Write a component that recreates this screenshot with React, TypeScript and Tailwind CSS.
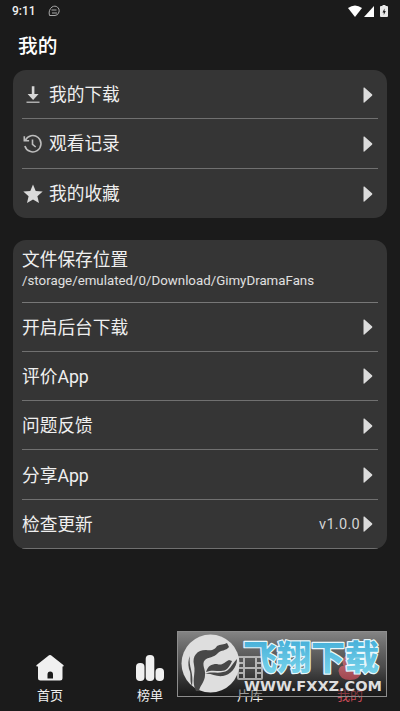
import type { ReactNode } from 'react';

const DownloadIcon = () => (
  <svg viewBox="0 0 20 20" className="size-5" fill="#d6d6d6">
    <path d="M8.800 1.300h2.600v7.700h4.200L10.100 15 4.600 9H8.800z" />
    <path d="M3.500 16.500h13v1.500h-13z" opacity=".75" />
  </svg>
);

const HistoryIcon = () => (
  <svg viewBox="0 0 20 20" className="size-5" fill="none" stroke="#bdbdbd" strokeWidth="1.600">
    <path d="M2.300 6.300A8.200 8.200 0 1 1 1.900 12" />
    <path d="M1.300 2.200v4.600h4.800" />
    <path d="M9.500 5.500v4.800l3.200 2.700" />
  </svg>
);

const StarIcon = () => (
  <svg viewBox="0 0 20 20" className="size-5" fill="#dadada">
    <path d="M10 .6l2.700 6.400 7 .6-5.300 4.600 1.600 6.900L10 15.400 4 19.100l1.600-6.900L.3 7.600l7-.6z" />
  </svg>
);

const Arrow = () => (
  <svg viewBox="0 0 10 16" className="h-4 w-2.5 shrink-0" fill="#dcdcdc">
    <path d="M.5 1Q.5 0 1.400.6L9 7.300q.8.700 0 1.400L1.400 15.400Q.5 16 .5 15z" />
  </svg>
);

const HomeIcon = () => (
  <svg viewBox="0 0 28 28" className="size-7" fill="#f0f0f0">
    <path
      fillRule="evenodd"
      d="M13 1.300q1-.7 2 0L27.300 11q1 1.200-.3 1.500H26.500V24q0 2.500-2.500 2.500H4.500Q2 26.500 2 24V12.500H1q-1.300-.3-.3-1.500zM11.500 24.500h5.500v-4q0-3-2.750-3t-2.750 3z"
    />
  </svg>
);

const RankIcon = () => (
  <svg viewBox="0 0 28 28" className="size-7" fill="#f0f0f0">
    <rect x="0" y="9" width="8.500" height="18" rx="4" />
    <rect x="9.700" y="1" width="8.600" height="26" rx="4" />
    <rect x="19.500" y="14" width="8.500" height="13" rx="4" />
  </svg>
);

const LibraryIcon = () => (
  <svg viewBox="0 0 28 28" className="size-7" fill="none" stroke="#f0f0f0" strokeWidth="2">
    <rect x="2" y="3" width="24" height="22" rx="1" />
    <path d="M8 3v22M20 3v22M2 9h6M2 14h6M2 19h6M20 9h6M20 14h6M20 19h6M8 14h12" />
  </svg>
);

const UserIcon = () => (
  <svg viewBox="0 0 28 28" className="size-7" fill="#e83f50">
    <circle cx="14" cy="8" r="7.500" />
    <path d="M2.500 17Q3 11 10 12h8q7-1 7.500 5-1 9-11.500 9T2.500 17z" />
  </svg>
);

interface RowProps {
  label: string;
  icon?: ReactNode;
  value?: string;
  last?: boolean;
}

function Row({ label, icon, value, last }: RowProps) {
  return (
    <div className={`flex h-[49.3px] items-center pt-px pr-[5px] ${last ? '' : 'border-b border-[#707070]'}`}>
      {icon && <span className="mr-[6px] ml-px">{icon}</span>}
      <span className="flex-1 pt-px">{label}</span>
      {value && <span className="mr-[3px] pt-px text-[14.5px] tracking-[0.3px] text-[#d4d4d4]">{value}</span>}
      <Arrow />
    </div>
  );
}

const tabs = [
  { label: '首页', icon: <HomeIcon /> },
  { label: '榜单', icon: <RankIcon /> },
  { label: '片库', icon: <LibraryIcon /> },
  { label: '我的', icon: <UserIcon />, active: true },
];

function Watermark() {
  return (
    <svg viewBox="0 0 210 66" className="absolute top-[631px] left-[177px] h-[66px] w-[210px]">
      <defs>
        <linearGradient id="plate" x1="0" y1="0" x2="0" y2="1">
          <stop offset="0" stopColor="#a8a8a8" stopOpacity=".75" />
          <stop offset=".55" stopColor="#7c7c7c" stopOpacity=".5" />
          <stop offset="1" stopColor="#141414" stopOpacity=".4" />
        </linearGradient>
        <linearGradient id="sky" x1="0" y1="0" x2="0" y2="1">
          <stop offset="0" stopColor="#39a6d4" />
          <stop offset="1" stopColor="#80d9ed" />
        </linearGradient>
      </defs>
      <rect x=".5" y=".5" width="209" height="65" fill="url(#plate)" stroke="#8d8d8d" />
      <circle cx="33.500" cy="32.500" r="29" fill="#dedede" />
      <g fill="#484848">
        <path d="M19 60C14 50 19 43 17 34C15 25 20 19 29 19C36 20 38 18 40 15C43 13 47 14 50 12L52 16C49 20 44 19 41 22C37 27 31 26 28 29C24 33 29 39 28 44C28 51 23 54 22 60z" />
        <path d="M13 25C11 35 17 41 15 55C12 49 15 44 12 38C11 33 11 29 13 25z" />
        <path d="M29 41C31 35 34 33 40 33C46 35 47 31 52 29L55 30C52 37 49 40 44 40C38 40 34 39 29 41z" />
        <path d="M28 43C34 40 40 43 46 41C53 40 54 34 60 28C60 37 53 44 46 45C39 46 34 42 28 43z" />
      </g>
      <text
        x="66"
        y="38.500"
        textLength="136"
        lengthAdjust="spacingAndGlyphs"
        className="font-['Noto_Sans_CJK_SC',sans-serif] text-[34px] font-black [paint-order:stroke]"
        fill="url(#sky)"
        stroke="#e9f8fc"
        strokeWidth="2.400"
        strokeLinejoin="round"
      >
        飞翔下载
      </text>
      <text
        x="67"
        y="60"
        textLength="138"
        lengthAdjust="spacingAndGlyphs"
        className="font-['DejaVu_Sans',sans-serif] text-[14px] font-bold"
        fill="#dedede"
      >
        WWW.FXXZ.COM
      </text>
    </svg>
  );
}

export default function App() {
  return (
    <div className="relative flex h-[711px] w-[400px] flex-col overflow-hidden bg-[#1b1b1b] font-[Roboto,'Noto_Sans_CJK_SC',sans-serif] text-[17.7px] leading-6 text-[#efefef]">
      <header className="flex h-[22px] shrink-0 items-center pr-3 pl-3">
        <span className="text-[12px] font-medium">9:11</span>
        <svg viewBox="0 0 12 12" className="ml-3 size-3" fill="none" stroke="#a8a8a8">
          <path d="M1.500 10.500C.5 7 1.500 4 4 2c4-2.500 8 1 7 5q-1 3.500-4 3.500zM3.500 5h5M4 8h5" />
        </svg>
        <div className="ml-auto flex items-center text-white">
          <svg viewBox="0 0 14 12" className="h-3 w-3.5" fill="currentColor">
            <path d="M0 3Q7-2 14 3L7 12z" />
          </svg>
          <svg viewBox="0 0 10 11" className="ml-[2px] h-[11px] w-2.5" fill="currentColor">
            <path d="M10 0v11H0z" />
          </svg>
          <svg viewBox="0 0 8 12" className="ml-1.5 h-3 w-2" fill="#e8e8e8">
            <path fillRule="evenodd" d="M2.500 0h3v1H7q1 0 1 1v9q0 1-1 1H1q-1 0-1-1V2q0-1 1-1h1.500zM4.500 3.500l-2 4h1.300V10l2-4H4.500z" />
          </svg>
        </div>
      </header>

      <h1 className="h-12 shrink-0 pt-[13px] pl-[18px] text-[19.7px] font-medium text-white">我的</h1>

      <main className="flex flex-col gap-[22px] px-[13px]">
        <section className="h-[148px] rounded-[13px] bg-[#353535] px-[9px]">
          <Row label="我的下载" icon={<DownloadIcon />} />
          <Row label="观看记录" icon={<HistoryIcon />} />
          <Row label="我的收藏" icon={<StarIcon />} last />
        </section>

        <section className="overflow-hidden rounded-[13px] bg-[#353535] px-[9px]">
          <div className="h-[62.500px] border-b border-[#777] pt-2">
            <div>文件保存位置</div>
            <div className="text-[13.3px] leading-[18px] text-[#e0e0e0]">/storage/emulated/0/Download/GimyDramaFans</div>
          </div>
          <Row label="开启后台下载" />
          <Row label="评价App" />
          <Row label="问题反馈" />
          <Row label="分享App" />
          <Row label="检查更新" value="v1.0.0" />
        </section>
      </main>

      <nav className="mt-auto grid h-[57px] shrink-0 grid-cols-4">
        {tabs.map(tab => (
          <div key={tab.label} className={`flex flex-col items-center text-[13px] leading-5 ${tab.active ? 'text-[#c94a57]' : ''}`}>
            {tab.icon}
            <span className="mt-1">{tab.label}</span>
          </div>
        ))}
      </nav>

      <Watermark />
    </div>
  );
}
